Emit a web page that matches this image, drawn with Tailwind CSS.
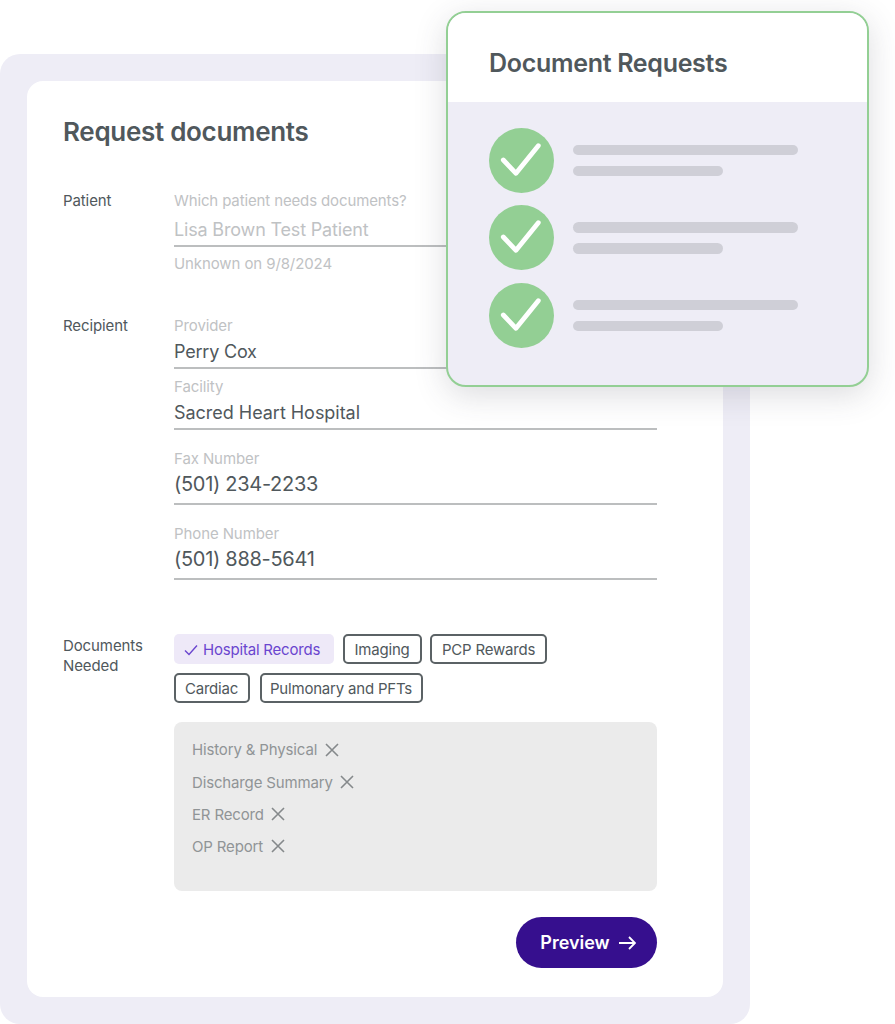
<!DOCTYPE html>
<html lang="en">
<head>
    <meta charset="UTF-8">
    <meta name="viewport" content="width=device-width, initial-scale=1.0">
    <title>Request documents</title>
    <script src="https://cdn.jsdelivr.net/npm/@tailwindcss/browser@4"></script>
</head>
<body class="bg-white font-['Inter',sans-serif] text-[#50585c] overflow-hidden">
    <div class="relative w-[895px] h-[1024px] pt-[54px]">
        <!-- background panel -->
        <div class="w-[750px] h-[970px] bg-[#eeedf6] rounded-[20px] p-[27px]">
            <div class="w-[696px] h-[916px] bg-white rounded-[16px] pl-[36px] pt-[34px]">
                <h1 class="text-[26px] leading-[34px] font-semibold tracking-[-0.3px]">Request documents</h1>

                <!-- patient -->
                <div class="flex mt-[40px]">
                    <div class="w-[111px] text-[15px] tracking-[-0.1px] leading-[24px]">Patient</div>
                    <div class="w-[483px] text-[#bfc2c4]">
                        <div class="text-[15px] tracking-[-0.13px] leading-[24px]">Which patient needs documents?</div>
                        <div class="text-[18px] tracking-[-0.17px] leading-[34px] h-[34px] border-b-2 border-[#bcbebf]">Lisa Brown Test Patient</div>
                        <div class="text-[15px] tracking-[-0.1px] leading-[24px] mt-[5px]">Unknown on 9/8/2024</div>
                    </div>
                </div>

                <!-- recipient -->
                <div class="flex mt-[38px]">
                    <div class="w-[111px] text-[15px] tracking-[-0.1px] leading-[24px]">Recipient</div>
                    <div class="w-[483px]">
                        <div class="text-[15px] tracking-[-0.1px] leading-[24px] text-[#bfc2c4]">Provider</div>
                        <div class="text-[18px] tracking-[-0.2px] leading-[28px] h-[31px] border-b-2 border-[#bcbebf]">Perry Cox</div>
                        <div class="text-[15px] tracking-[-0.1px] leading-[24px] text-[#bfc2c4] mt-[6px]">Facility</div>
                        <div class="text-[18px] tracking-[-0.03px] leading-[28px] h-[31px] border-b-2 border-[#bcbebf]">Sacred Heart Hospital</div>
                        <div class="text-[15px] tracking-[-0.1px] leading-[24px] text-[#bfc2c4] mt-[17px]">Fax Number</div>
                        <div class="text-[20px] tracking-[-0.3px] leading-[26px] h-[34px] border-b-2 border-[#bcbebf]">(501) 234-2233</div>
                        <div class="text-[15px] tracking-[-0.1px] leading-[24px] text-[#bfc2c4] mt-[17px]">Phone Number</div>
                        <div class="text-[20px] tracking-[-0.3px] leading-[26px] h-[34px] border-b-2 border-[#bcbebf]">(501) 888-5641</div>
                    </div>
                </div>

                <!-- documents -->
                <div class="flex mt-[54px]">
                    <div class="w-[111px] text-[15px] tracking-[-0.1px] leading-[20px] pt-[2px]">Documents<br>Needed</div>
                    <div class="w-[483px]">
                        <div class="flex flex-col gap-[9px] text-[15px] tracking-[-0.2px]">
                            <div class="flex gap-[9px]">
                                <div class="h-[30px] w-[160px] flex items-center gap-[5px] pl-[10px] pt-[2px] bg-[#eee9f8] text-[#6a45cf] rounded-[5px]">
                                    <svg class="w-[14px] h-[12px] mb-[1px]" viewBox="0 0 14 12" fill="none" stroke="#6a45cf" stroke-width="1.4"><path d="M1 6.5 5 10.5 13 1.5"/></svg>
                                    Hospital Records
                                </div>
                                <div class="h-[30px] w-[79px] flex items-center justify-center pt-[2px] pr-[1px] border-2 border-[#5b6265] rounded-[5px]">Imaging</div>
                                <div class="h-[30px] w-[117px] -ml-[1px] flex items-center justify-center pt-[2px] border-2 border-[#5b6265] rounded-[5px]">PCP Rewards</div>
                            </div>
                            <div class="flex gap-[10px]">
                                <div class="h-[30px] w-[76px] flex items-center justify-center pt-[2px] pr-[1px] border-2 border-[#5b6265] rounded-[5px]">Cardiac</div>
                                <div class="h-[30px] w-[163px] flex items-center justify-center pt-[2px] pr-[1px] border-2 border-[#5b6265] rounded-[5px]">Pulmonary and PFTs</div>
                            </div>
                        </div>
                        <div class="h-[169px] mt-[19px] bg-[#ebebeb] rounded-[8px] pl-[18px] pt-[12px] text-[15px] tracking-[-0.15px] text-[#909496]">
                            <div class="h-[32px] flex items-center gap-[8px]">History &amp; Physical
                                <svg class="w-[14px] h-[14px]" viewBox="0 0 14 14" fill="none" stroke="#85898b" stroke-width="1.6"><path d="M1 1 13 13M13 1 1 13"/></svg>
                            </div>
                            <div class="h-[32px] flex items-center gap-[7px] pt-[2px]">Discharge Summary
                                <svg class="w-[14px] h-[14px] mb-[2px]" viewBox="0 0 14 14" fill="none" stroke="#85898b" stroke-width="1.6"><path d="M1 1 13 13M13 1 1 13"/></svg>
                            </div>
                            <div class="h-[32px] flex items-center gap-[7px] pt-[2px]">ER Record
                                <svg class="w-[14px] h-[14px] mb-[2px]" viewBox="0 0 14 14" fill="none" stroke="#85898b" stroke-width="1.6"><path d="M1 1 13 13M13 1 1 13"/></svg>
                            </div>
                            <div class="h-[32px] flex items-center gap-[8px] pt-[2px]">OP Report
                                <svg class="w-[14px] h-[14px] mb-[2px]" viewBox="0 0 14 14" fill="none" stroke="#85898b" stroke-width="1.6"><path d="M1 1 13 13M13 1 1 13"/></svg>
                            </div>
                        </div>
                        <div class="flex justify-end mt-[26px]">
                            <div class="w-[141px] h-[51px] rounded-full bg-[#360f8e] text-white text-[18px] font-semibold flex items-center justify-center gap-[8px] pl-[3px]">
                                Preview
                                <svg class="w-[18px] h-[14px]" viewBox="0 0 18 14" fill="none" stroke="white" stroke-width="1.8"><path d="M1 7H17M11 1l6 6-6 6"/></svg>
                            </div>
                        </div>
                    </div>
                </div>
            </div>
        </div>

        <!-- floating card -->
        <div class="absolute left-[446px] top-[11px] w-[423px] h-[376px] border-2 border-[#93cf94] rounded-[20px] overflow-hidden bg-[#eeedf6] shadow-[0_8px_32px_rgba(60,60,80,0.18)]">
            <div class="h-[89px] bg-white pl-[41px] pt-[32px] text-[25px] leading-[36px] font-semibold tracking-[-0.3px]">Document Requests</div>
            <div class="pl-[41px] pt-[26px] flex flex-col gap-[12.4px]">
                <div class="flex items-center gap-[19px]">
                    <svg class="w-[65px] h-[65px]" viewBox="0 0 65 65" fill="none"><circle cx="32.5" cy="32.5" r="32.5" fill="#93cf94"/><path d="M14.3 32 27 45.3 49.3 17.7" stroke="white" stroke-width="4.8" stroke-linecap="round" stroke-linejoin="round"/></svg>
                    <div class="flex flex-col gap-[10.5px]">
                        <div class="w-[225px] h-[10.5px] rounded-full bg-[#cfcfd7]"></div>
                        <div class="w-[150px] h-[10.5px] rounded-full bg-[#cfcfd7]"></div>
                    </div>
                </div>
                <div class="flex items-center gap-[19px]">
                    <svg class="w-[65px] h-[65px]" viewBox="0 0 65 65" fill="none"><circle cx="32.5" cy="32.5" r="32.5" fill="#93cf94"/><path d="M14.3 32 27 45.3 49.3 17.7" stroke="white" stroke-width="4.8" stroke-linecap="round" stroke-linejoin="round"/></svg>
                    <div class="flex flex-col gap-[10.5px]">
                        <div class="w-[225px] h-[10.5px] rounded-full bg-[#cfcfd7]"></div>
                        <div class="w-[150px] h-[10.5px] rounded-full bg-[#cfcfd7]"></div>
                    </div>
                </div>
                <div class="flex items-center gap-[19px]">
                    <svg class="w-[65px] h-[65px]" viewBox="0 0 65 65" fill="none"><circle cx="32.5" cy="32.5" r="32.5" fill="#93cf94"/><path d="M14.3 32 27 45.3 49.3 17.7" stroke="white" stroke-width="4.8" stroke-linecap="round" stroke-linejoin="round"/></svg>
                    <div class="flex flex-col gap-[10.5px]">
                        <div class="w-[225px] h-[10.5px] rounded-full bg-[#cfcfd7]"></div>
                        <div class="w-[150px] h-[10.5px] rounded-full bg-[#cfcfd7]"></div>
                    </div>
                </div>
            </div>
        </div>
    </div>
</body>
</html>
